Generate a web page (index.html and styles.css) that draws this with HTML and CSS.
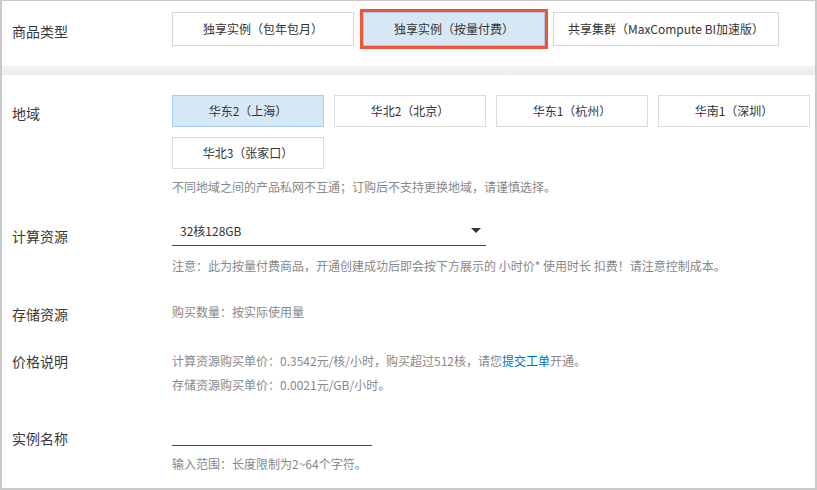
FILE: index.html
```html
<!DOCTYPE html>
<html lang="zh-CN">
<head>
    <meta charset="UTF-8">
    <meta name="viewport" content="width=device-width, initial-scale=1.0">
    <title>购买实例</title>
    <link rel="stylesheet" href="styles.css">
</head>
<body>

    <div class="frame">
        <div class="top">
            <div class="label">商品类型</div>
            <div class="types">
                <div class="type-btn t1">独享实例（包年包月）</div>
                <div class="type-btn t2 active">独享实例（按量付费）</div>
                <div class="type-btn t3">共享集群（MaxCompute BI加速版）</div>
            </div>
        </div>

        <div class="band"></div> <!-- серая полоса между блоками -->

        <div class="form">
            <div class="row region">
                <div class="label">地域</div>
                <div class="content">
                    <div class="regions">
                        <div class="region-btn active">华东2（上海）</div>
                        <div class="region-btn">华北2（北京）</div>
                        <div class="region-btn">华东1（杭州）</div>
                        <div class="region-btn">华南1（深圳）</div>
                        <div class="region-btn">华北3（张家口）</div>
                    </div>
                    <div class="hint region-hint">不同地域之间的产品私网不互通；订购后不支持更换地域，请谨慎选择。</div>
                </div>
            </div>

            <div class="row compute">
                <div class="label">计算资源</div>
                <div class="content">
                    <div class="select">
                        <span>32核128GB</span>
                        <span class="arrow"></span>
                    </div>
                    <div class="hint compute-hint">注意：此为按量付费商品，开通创建成功后即会按下方展示的 小时价* 使用时长 扣费！请注意控制成本。</div>
                </div>
            </div>

            <div class="row storage">
                <div class="label">存储资源</div>
                <div class="content">
                    <div class="hint">购买数量：按实际使用量</div>
                </div>
            </div>

            <div class="row price">
                <div class="label">价格说明</div>
                <div class="content">
                    <div class="hint">计算资源购买单价：0.3542元/核/小时，购买超过512核，请您<a href="#">提交工单</a>开通。</div>
                    <div class="hint">存储资源购买单价：0.0021元/GB/小时。</div>
                </div>
            </div>

            <div class="row name">
                <div class="label">实例名称</div>
                <div class="content">
                    <div class="input"></div>
                    <div class="hint name-hint">输入范围：长度限制为2~64个字符。</div>
                </div>
            </div>
        </div>
    </div>

</body>
</html>
```

FILE: styles.css
```css
body {
    margin: 0;
    font-family: "Noto Sans CJK SC", "Microsoft YaHei", sans-serif;
    color: #333;
    background: #fff;
}
.frame {
    width: 817px;
    height: 490px;
    box-sizing: border-box;
    border: 1px solid #c9c9c9;
    border-left-width: 2px;
    border-right-width: 2px;
    border-bottom-width: 2px;
    overflow: hidden;
}
.label {
    width: 160px;
    flex-shrink: 0;
    padding-left: 10px;
    font-size: 14px;
    line-height: 20px;
    color: #383838;
}

/* Верхний блок: тип товара */
.top {
    display: flex;
    align-items: center;
    padding: 11px 0 20px 0;
}
.top .label {
    padding-top: 4px;
}
.types {
    display: flex;
    gap: 8px;
}
.type-btn {
    height: 34px;
    box-sizing: border-box;
    border: 1px solid #d7d7d7;
    font-size: 12px;
    line-height: 32px;
    text-align: center;
    color: #333;
}
.t1 { width: 182px; }
.t2 { width: 182px; margin-left: 1px; }
.t3 { width: 226px; }
.type-btn.active {
    background-color: #d6e8f6;
    border-color: #a7cbe8;
    outline: 3px solid #f0553b; /* красная рамка-пометка */
}
.band {
    height: 9px;
    background: linear-gradient(#f2f2f4, #ebebed);
}

/* Форма */
.form {
    padding-top: 20px;
}
.row {
    display: flex;
}
.content {
    flex: 1;
}
.hint {
    font-size: 12px;
    line-height: 18px;
    color: #888;
}
.hint a {
    color: #0070cc;
    text-decoration: none;
}

.region .label {
    padding-top: 8px;
}
.regions {
    display: grid;
    grid-template-columns: repeat(4, 152px);
    gap: 10px;
}
.region-btn {
    height: 32px;
    box-sizing: border-box;
    border: 1px solid #dcdcdc;
    font-size: 12px;
    line-height: 30px;
    text-align: center;
    color: #333;
}
.region-btn.active {
    background-color: #d6e8f6;
    border-color: #a9cdea;
}
.region-hint {
    margin-top: 9px;
}

.compute {
    margin-top: 20px;
}
.compute .label {
    padding-top: 10px;
}
.select {
    width: 314px;
    height: 30px;
    box-sizing: border-box;
    border-bottom: 1px solid #444;
    display: flex;
    justify-content: space-between;
    align-items: center;
    padding: 0 5px 0 8px;
    font-size: 12px;
    color: #333;
}
.arrow {
    width: 0;
    height: 0;
    border-left: 5px solid transparent;
    border-right: 5px solid transparent;
    border-top: 5px solid #333;
}
.compute-hint {
    margin-top: 11px;
}

.storage {
    margin-top: 28px;
}
.storage .label {
    padding-top: 2px;
    line-height: 18px;
}

.price {
    margin-top: 26px;
}
.price .hint {
    line-height: 24px;
}
.price .label {
    padding-top: 2px;
}

.name {
    margin-top: 19px;
}
.name .label {
    padding-top: 12px;
}
.input {
    width: 200px;
    height: 30px;
    box-sizing: border-box;
    border-bottom: 1px solid #444;
}
.name-hint {
    margin-top: 9px;
}
```
